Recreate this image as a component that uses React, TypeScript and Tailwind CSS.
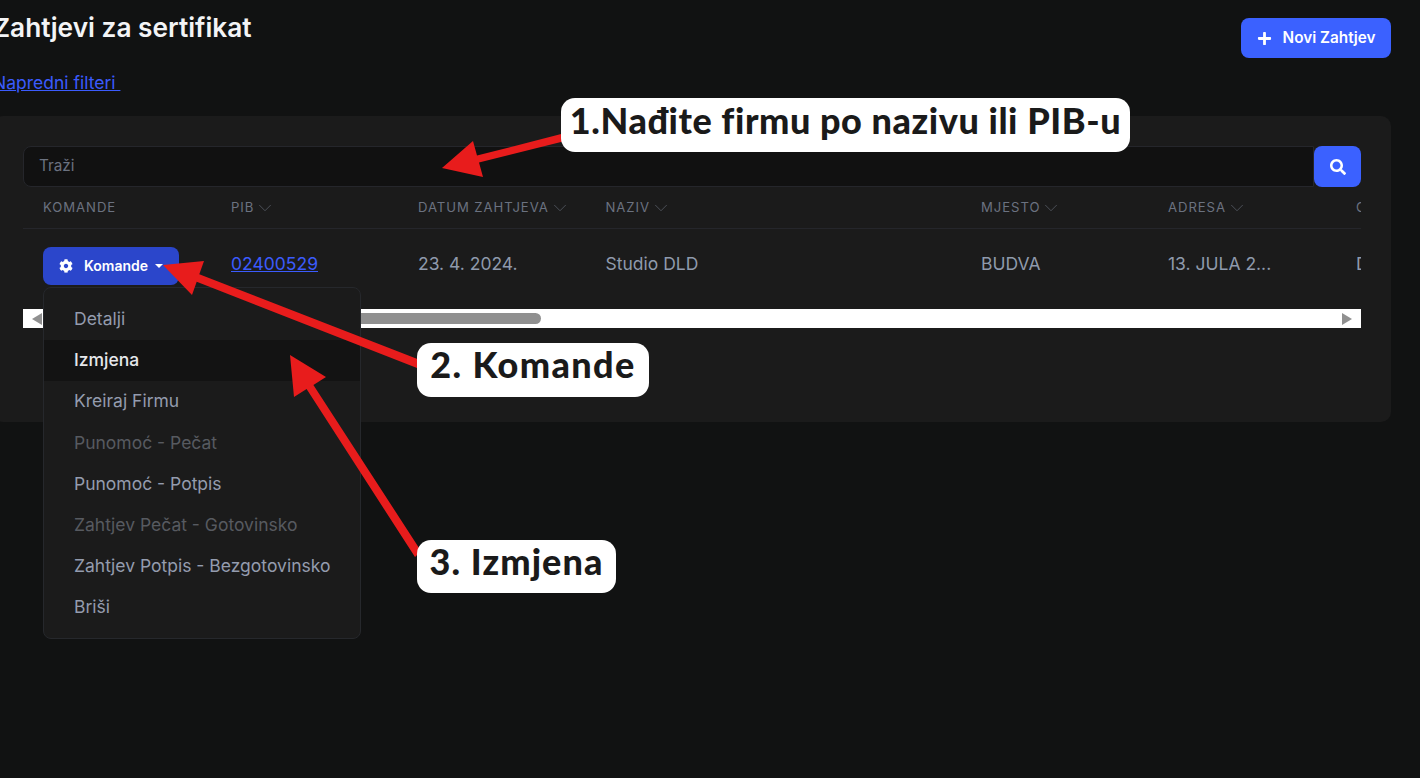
import { FaPlus, FaSearch, FaCog } from "react-icons/fa";
import { ChevronDown } from "lucide-react";

const cols = [
  { label: "PIB", w: "w-[187px]" },
  { label: "DATUM ZAHTJEVA", w: "w-[187.5px]" },
  { label: "NAZIV", w: "w-[375.5px]" },
  { label: "MJESTO", w: "w-[187px]" },
  { label: "ADRESA", w: "w-[188px]" },
];

const items = [
  { t: "Detalji", c: "text-[#949cae]" },
  { t: "Izmjena", c: "text-[#e5e7eb] bg-[#131313] font-medium" },
  { t: "Kreiraj Firmu", c: "text-[#949cae]" },
  { t: "Punomoć - Pečat", c: "text-[#575a60]" },
  { t: "Punomoć - Potpis", c: "text-[#949cae]" },
  { t: "Zahtjev Pečat - Gotovinsko", c: "text-[#575a60]" },
  { t: "Zahtjev Potpis - Bezgotovinsko", c: "text-[#949cae]" },
  { t: "Briši", c: "text-[#949cae]" },
];

function Label({ className, children }: { className: string; children: React.ReactNode }) {
  return (
    <div className={`absolute flex items-center justify-center rounded-[14px] bg-white pb-[11px] text-[#1a1a1a] font-[Lato,sans-serif] font-black text-[36px] whitespace-nowrap ${className}`}>
      {children}
    </div>
  );
}

export default function App() {
  return (
    <div className="relative h-[778px] w-[1420px] overflow-hidden bg-[#111212] font-[Inter,sans-serif]">
      <div className="ml-[-7px] w-[1398px]">
        <div className="flex h-[116px] items-start justify-between">
          <div>
            <h1 className="mt-[12px] text-[26.25px] font-semibold leading-[32px] text-[#f3f4f6]">Zahtjevi za sertifikat</h1>
            <a className="mt-[26px] block text-[17.5px] leading-[26px] text-[#3b5bfd] underline">Napredni filteri&nbsp;</a>
          </div>
          <button className="mt-[18px] flex h-[40px] w-[150px] items-center justify-center gap-[11px] rounded-lg bg-[#3b61ff] text-[15.3px] font-semibold text-white">
            <FaPlus size={15} />
            Novi Zahtjev
          </button>
        </div>

        <div className="h-[306px] rounded-[10px] bg-[#1b1b1b] px-[30px] pt-[30px]">
          <div className="flex h-[41px]">
            <div className="flex flex-1 items-center rounded-l-lg border border-[#25262b] bg-[#111111] pl-[15px] text-[15.3px] text-[#6b7280]">Traži</div>
            <button className="flex w-[47px] items-center justify-center rounded-lg bg-[#3b61ff] text-white">
              <FaSearch size={16} />
            </button>
          </div>

          <div className="w-[1338px] overflow-hidden">
            <div className="flex h-[42px] w-[1500px] items-center border-b border-[#25262b] text-[13.125px] tracking-[0.072em] text-[#6b7280]">
              <div className="w-[188px] pl-[20px]">KOMANDE</div>
              {cols.map((c) => (
                <div key={c.label} className={`flex items-center pl-[20px] ${c.w}`}>
                  {c.label}
                  <ChevronDown size={22} strokeWidth={0.8} className="text-[#5c626c]" />
                </div>
              ))}
              <div className="pl-[20px]">OVLAŠĆENO</div>
            </div>
            <div className="flex h-[80px] w-[1500px] items-start text-[17.5px] leading-[26px] text-[#8f9aac]">
              <div className="w-[188px] pl-[20px] pt-[18px]">
                <button className="flex h-[38px] w-[136px] items-center justify-center gap-[7px] rounded-lg bg-[#2b46cb] text-[14px] font-semibold text-white">
                  <FaCog size={14} className="mr-[4px]" />
                  Komande
                  <span className="h-0 w-0 border-x-[4px] border-t-[4px] border-x-transparent border-t-white" />
                </button>
              </div>
              <div className="w-[187px] pl-[20px] pt-[22px]"><a className="text-[#3b5bfd] underline">02400529</a></div>
              <div className="w-[187.5px] pl-[20px] pt-[22px]">23. 4. 2024.</div>
              <div className="w-[375.5px] pl-[20px] pt-[22px]">Studio DLD</div>
              <div className="w-[187px] pl-[20px] pt-[22px]">BUDVA</div>
              <div className="w-[188px] pl-[20px] pt-[22px]">13. JULA 2...</div>
              <div className="pl-[20px] pt-[22px]">DA</div>
            </div>
          </div>
          <div className="flex h-[19px] w-[1338px] items-center justify-between bg-white pl-[9px] pr-[9px]">
            <span className="h-0 w-0 border-y-[6px] border-r-[10px] border-y-transparent border-r-[#909090]" />
            <span className="h-0 w-0 border-y-[6px] border-l-[10px] border-y-transparent border-l-[#909090]" />
          </div>
        </div>
      </div>

      {/* scrollbar thumb */}
      <div className="absolute left-[46px] top-[313px] h-[11px] w-[495px] rounded-full bg-[#909090]" />

      {/* dropdown */}
      <div className="absolute left-[43px] top-[287px] h-[352px] w-[318px] rounded-lg border border-[#26282c] bg-[#1b1b1b] pt-[10.5px]">
        {items.map((i) => (
          <div key={i.t} className={`flex h-[41.2px] items-center pl-[30px] text-[17.5px] ${i.c}`}>{i.t}</div>
        ))}
      </div>

      {/* annotation arrows */}
      <svg className="absolute left-0 top-0" width="1420" height="778" fill="#e81c1c" stroke="none">
        <path d="M565 133 L477 155.6 L473 141 L442 168 L483 177 L479 162.4 L565 141 Z" />
        <path d="M420 360 L199.3 274.2 L204 261 L163 265 L192 295 L196.7 281.8 L417 368 Z" />
        <path d="M421 551 L313.4 384.9 L326 377 L290 355 L294 397 L306.6 389.1 L415 557 Z" />
      </svg>

      <Label className="left-[561px] top-[98px] h-[54px] w-[569px] tracking-[0.56px]">1.Nađite firmu po nazivu ili PIB-u</Label>
      <Label className="left-[417px] top-[343px] h-[54px] w-[232px] pb-[13px] tracking-[1.4px]">2. Komande</Label>
      <Label className="left-[417px] top-[540px] h-[53px] w-[199px] tracking-[1.1px]">3. Izmjena</Label>
    </div>
  );
}
